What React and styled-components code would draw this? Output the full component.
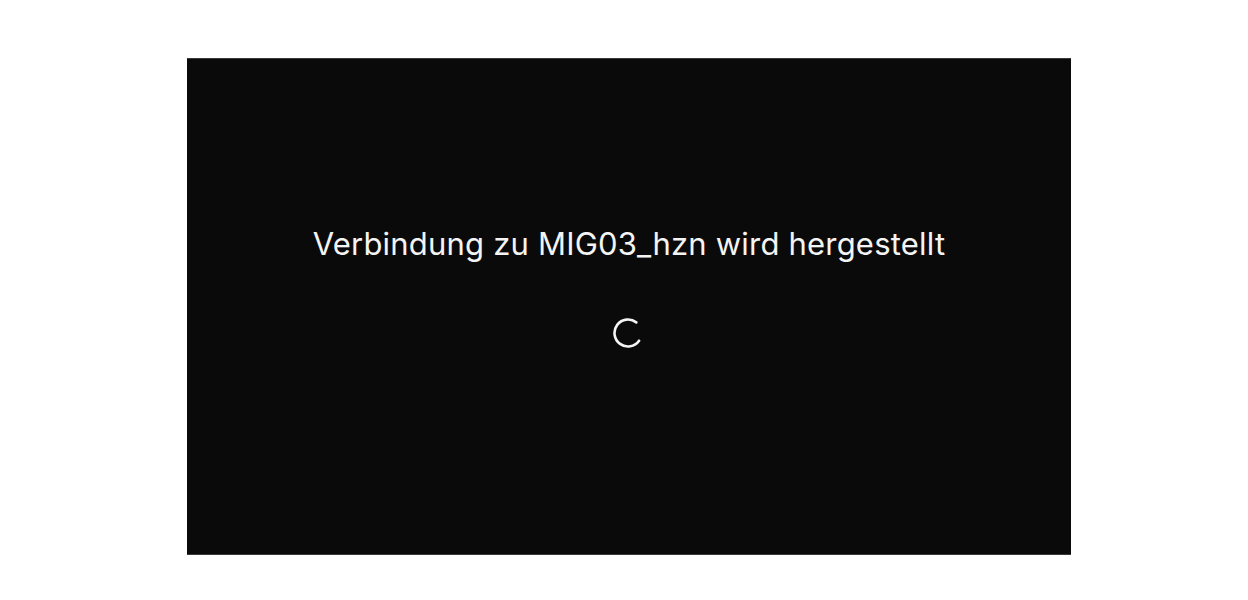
import React from "react";
import styled, { createGlobalStyle } from "styled-components";

const Global = createGlobalStyle`
  html, body { margin: 0; padding: 0; background: #ffffff; }
  body { font-family: Inter, Roboto, "Noto Sans", Arial, sans-serif; }
`;

const Page = styled.div`
  width: 1248px;
  height: 600px;
  padding: 58px 0 0 187px;
  box-sizing: border-box;
`;

const Screen = styled.div`
  width: 884px;
  height: 497px;
  box-sizing: border-box;
  background: #0a0a0a;
  border-top: 1px solid #3a3a3a;
  border-bottom: 1px solid #3a3a3a;
  display: flex;
  flex-direction: column;
  align-items: center;
  padding-top: 165px;
`;

const Title = styled.div`
  color: #f4f4f4;
  font-family: Inter, Roboto, "Noto Sans", Arial, sans-serif;
  font-size: 31px;
  line-height: 40px;
  font-weight: 400;
  letter-spacing: 0.2px;
  white-space: nowrap;
`;

const Spinner = styled.svg`
  margin-top: 53px;
  width: 32px;
  height: 32px;
  display: block;
`;

function arcPath(cx, cy, r, startDeg, endDeg) {
  const toRad = (d) => (d * Math.PI) / 180;
  const x1 = cx + r * Math.cos(toRad(startDeg));
  const y1 = cy + r * Math.sin(toRad(startDeg));
  const x2 = cx + r * Math.cos(toRad(endDeg));
  const y2 = cy + r * Math.sin(toRad(endDeg));
  const sweep = endDeg - startDeg;
  const large = sweep > 180 ? 1 : 0;
  return `M ${x1.toFixed(2)} ${y1.toFixed(2)} A ${r} ${r} 0 ${large} 1 ${x2.toFixed(2)} ${y2.toFixed(2)}`;
}

export default function App() {
  return (
    <>
      <Global />
      <Page>
        <Screen>
          <Title>Verbindung zu MIG03_hzn wird hergestellt</Title>
          <Spinner viewBox="0 0 32 32">
            <path
              d={arcPath(15, 16, 13.5, 35, 308)}
              fill="none"
              stroke="#f4f4f4"
              strokeWidth="2.6"
              strokeLinecap="round"
            />
          </Spinner>
        </Screen>
      </Page>
    </>
  );
}
